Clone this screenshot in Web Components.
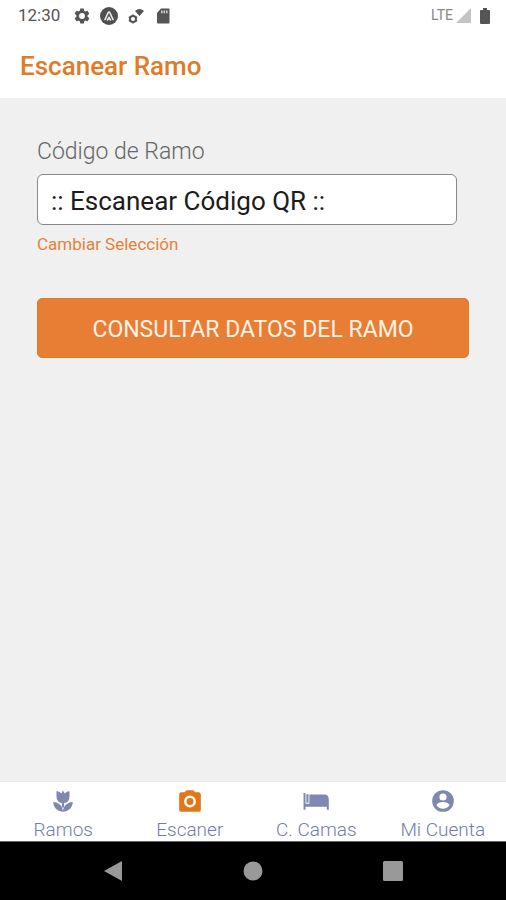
<!DOCTYPE html>
<html lang="es">
<head>
<meta charset="utf-8">
<meta name="viewport" content="width=device-width, initial-scale=1">
<title>Escanear Ramo</title>
<style>
  body { margin: 0; background: #f0f0f0; font-family: Roboto, "Liberation Sans", sans-serif; }
</style>
</head>
<body>
<scan-app></scan-app>

<template id="status-bar">
  <style>
    :host { display: flex; align-items: center; justify-content: space-between; height: 31px; padding: 0 16px 0 18px; background: #fff; color: #555; }
    div { display: flex; align-items: center; }
    .left svg { display: block; }
    .left { gap: 9px; }
    .time { font: 400 17px/31px Roboto, sans-serif; margin-right: 4px; }
    .lte { font: 400 14px/31px Roboto, sans-serif; color: #888; }
    .right svg { display: block; }
    .right { gap: 3px; }
    .battery { margin-left: 6px; }
  </style>
  <div class="left">
    <span class="time">12:30</span>
    <svg width="18" height="18" viewBox="0 0 24 24" aria-hidden="true"><path fill="#555" fill-rule="evenodd" d="M19.4 13c.1-.3.1-.6.1-1s0-.7-.1-1l2.1-1.600c.2-.2.2-.4.1-.7l-2-3.400c-.1-.2-.4-.3-.6-.2l-2.500 1c-.5-.4-1.100-.7-1.700-1l-.4-2.600c0-.3-.2-.5-.4-.5h-4c-.3 0-.5.2-.5.5l-.4 2.600c-.6.300-1.200.600-1.700 1l-2.500-1c-.2-.1-.5 0-.6.2l-2 3.400c-.1.3-.1.5.1.7L4.600 11c0 .3-.1.700-.1 1s0 .7.1 1l-2.100 1.600c-.2.2-.2.4-.1.7l2 3.400c.1.2.4.3.6.2l2.500-1c.5.400 1.100.700 1.700 1l.4 2.600c0 .3.200.5.500.5h4c.2 0 .4-.2.4-.5l.4-2.600c.6-.3 1.200-.6 1.700-1l2.500 1c.2.1.5 0 .6-.2l2-3.400c.1-.3.1-.5-.1-.7zM12 15.900a3.900 3.900 0 1 1 0-7.800 3.900 3.900 0 0 1 0 7.800z"/></svg>
    <svg width="18" height="18" viewBox="0 0 18 18" aria-hidden="true"><circle cx="9" cy="9" r="9" fill="#4f4f4f"/><path d="M5 12.500 8 6q1-2 2 0l3 6.500M7.500 13 9 10.500l1.500 2.500" fill="none" stroke="#eee" stroke-width="1.600" stroke-linecap="round"/></svg>
    <svg width="18" height="18" viewBox="0 0 18 18" aria-hidden="true"><circle cx="6" cy="12" r="3" fill="none" stroke="#555" stroke-width="2"/><path d="M6 7.500V9M6 15v1.500M1.800 9.800l1.500.8M10.200 9.800l-1.500.8M1.800 14.200l1.500-.8M10.200 14.200l-1.500-.8" stroke="#555" stroke-width="1.500"/><path d="M8 4q4.500-4 9 0l-4.500 5z" fill="#555"/></svg>
    <svg width="18" height="18" viewBox="0 0 18 18" aria-hidden="true"><path d="M7 1.500h7.500q1 0 1 1v13q0 1-1 1h-10.500q-1 0-1-1V6z" fill="#555"/><path d="M7.800 3.500v2.800M10.300 3.500v2.800M12.800 3.500v2.800" stroke="#ddd" stroke-width="1.400"/></svg>
  </div>
  <div class="right">
    <span class="lte">LTE</span>
    <svg width="15" height="15" viewBox="0 0 15 15" aria-hidden="true"><path d="M15 0v15H0z" fill="#c4c4c4"/></svg>
    <svg class="battery" width="10" height="16" viewBox="0 0 10 16" aria-hidden="true"><path d="M3 0h4v2h2q1 0 1 1v12q0 1-1 1H1q-1 0-1-1V3q0-1 1-1h2z" fill="#555"/></svg>
  </div>
</template>

<template id="screen-header">
  <style>
    :host { display: block; background: #fff; padding: 19px 20px 16px; color: #e07b28; }
    h1 { margin: 0; font: 500 26px/32px Roboto, sans-serif; }
  </style>
  <h1><slot></slot></h1>
</template>

<template id="scan-field">
  <style>
    :host { display: block; padding-right: 12px; }
    label { display: block; font: 300 23px/28px Roboto, sans-serif; color: #666; margin-bottom: 8px; }
    input { display: block; box-sizing: border-box; width: 100%; height: 51px; border: 1px solid #888; border-radius: 6px; background: #fff; padding: 2px 13px 0; font: 400 26px/32px Roboto, sans-serif; color: #1c1c1c; outline: none; }
    a { display: inline-block; margin-top: 8px; font: 400 17px/22px Roboto, sans-serif; color: #e6813a; text-decoration: none; }
  </style>
  <label for="code"><slot></slot></label>
  <input id="code" type="text" readonly value=":: Escanear Código QR ::">
  <a href="#cambiar">Cambiar Selección</a>
</template>

<template id="primary-button">
  <style>
    :host { display: block; }
    button { display: block; width: 100%; height: 60px; border: 1px solid #e07c28; border-radius: 5px; background: #e77e33; color: #fff2e8; font: 400 23px/32px Roboto, sans-serif; padding: 4px 0 0; cursor: pointer; }
  </style>
  <button type="button"><slot></slot></button>
</template>

<template id="tab-item">
  <style>
    :host { display: block; }
    a { display: flex; flex-direction: column; align-items: center; gap: 5px; color: #7f88ae; text-decoration: none; font: 300 19px/22px Roboto, sans-serif; }
    svg { display: block; }
    .active { color: #e27718; }
    .text { color: #767ba6; white-space: nowrap; }
  </style>
  <a href="#"><svg width="26" height="26" viewBox="0 0 24 24" fill="currentColor" aria-hidden="true"><path fill-rule="evenodd"></path></svg><span class="text"><slot></slot></span></a>
</template>

<template id="tab-bar">
  <style>
    :host { display: block; background: #fff; border-top: 1px solid #e9e9e9; }
    nav { display: grid; grid-template-columns: repeat(4, 1fr); padding: 6px 0 0; }
  </style>
  <nav aria-label="Principal"><slot></slot></nav>
</template>

<template id="system-nav">
  <style>
    :host { display: grid; grid-template-columns: repeat(3, 1fr); height: 59px; padding: 0 43px; background: #000; border-top: 1px solid #666; box-sizing: border-box; }
    button { display: grid; place-items: center; background: none; border: 0; padding: 0; }
    svg { display: block; }
  </style>
  <button type="button" aria-label="Atrás"><svg width="20" height="20" viewBox="0 0 20 20"><path d="M19 0v20L1 10z" fill="#999"/></svg></button>
  <button type="button" aria-label="Inicio"><svg width="20" height="20" viewBox="0 0 20 20"><circle cx="10" cy="10" r="9.500" fill="#999"/></svg></button>
  <button type="button" aria-label="Recientes"><svg width="20" height="20" viewBox="0 0 20 20"><rect width="20" height="20" rx="1.500" fill="#999"/></svg></button>
</template>

<template id="scan-app">
  <style>
    :host { display: flex; flex-direction: column; min-height: 100vh; }
    main { flex: 1; padding: 40px 37px; background: #f0f0f0; display: flex; flex-direction: column; gap: 43px; }
  </style>
  <status-bar></status-bar>
  <screen-header>Escanear Ramo</screen-header>
  <main>
    <scan-field>Código de Ramo</scan-field>
    <primary-button>CONSULTAR DATOS DEL RAMO</primary-button>
  </main>
  <tab-bar>
    <tab-item icon="flower">Ramos</tab-item>
    <tab-item icon="camera" active>Escaner</tab-item>
    <tab-item icon="bed">C. Camas</tab-item>
    <tab-item icon="account">Mi Cuenta</tab-item>
  </tab-bar>
  <system-nav></system-nav>
</template>

<script>
  const ICONS = {
    flower: 'M3 13c0 4.970 4.030 9 9 9 0-4.970-4.030-9-9-9zM12 22c4.970 0 9-4.030 9-9-4.970 0-9 4.030-9 9zM18 3v5a6 6 0 0 1-5 5.920V18h-2v-4.080A6 6 0 0 1 6 8V3c.74 0 1.470.12 2.160.39.950.35 1.740.96 2.400 1.760L12 2l1.450 3.150c.66-.8 1.450-1.410 2.400-1.760C16.530 3.120 17.260 3 18 3z',
    camera: 'M4 4h3l2-2h6l2 2h3a2 2 0 0 1 2 2v14a2 2 0 0 1-2 2H4a2 2 0 0 1-2-2V6a2 2 0 0 1 2-2zM12 7a5.500 5.500 0 1 0 0 11 5.500 5.500 0 0 0 0-11zM12 9.300a3.200 3.200 0 1 1 0 6.400 3.200 3.200 0 0 1 0-6.400z',
    bed: 'M.5 4.500H2.300V14.500H5.900V6H19.500Q23.800 6 23.800 10.500V20H22V17.300H2.300V20H.5zM3.100 6.500q0-1 1-1t1 1V13.500h-2z',
    account: 'M12 2a10 10 0 1 0 0 20 10 10 0 0 0 0-20zm0 3a3.300 3.300 0 1 1 0 6.600A3.300 3.300 0 0 1 12 5zm0 14.200a7.200 7.200 0 0 1-6-3.220c.03-1.990 4-3.080 6-3.080s5.970 1.090 6 3.080a7.200 7.200 0 0 1-6 3.220z'
  };

  class TemplateElement extends HTMLElement {
    constructor() {
      super();
      const template = document.getElementById(this.localName);
      this.attachShadow({ mode: 'open' }).append(template.content.cloneNode(true));
    }
  }

  class TabItem extends TemplateElement {
    connectedCallback() {
      this.shadowRoot.querySelector('path').setAttribute('d', ICONS[this.getAttribute('icon')]);
      if (this.hasAttribute('active')) {
        const link = this.shadowRoot.querySelector('a');
        link.classList.add('active');
        link.setAttribute('aria-current', 'page');
      }
    }
  }

  customElements.define('tab-item', TabItem);
  for (const name of ['status-bar', 'screen-header', 'scan-field', 'primary-button', 'tab-bar', 'system-nav', 'scan-app']) {
    customElements.define(name, class extends TemplateElement {});
  }
</script>
</body>
</html>
